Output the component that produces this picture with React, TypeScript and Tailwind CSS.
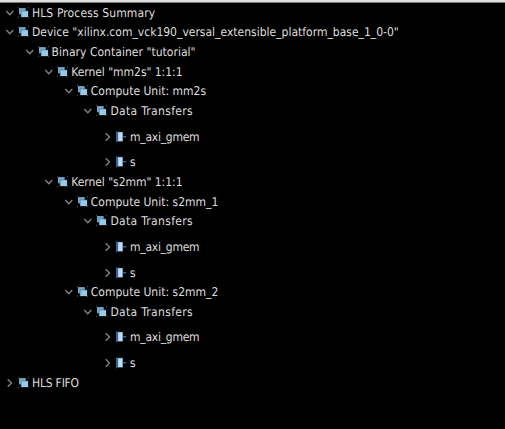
type Row = { label: string; depth: number; kind?: 'leaf' | 'closed'; spacing?: string };

const rows: Row[] = [
  { label: 'HLS Process Summary', depth: 0, spacing: 'tracking-[0.12px]' },
  { label: 'Device "xilinx.com_vck190_versal_extensible_platform_base_1_0-0"', depth: 0 },
  { label: 'Binary Container "tutorial"', depth: 1, spacing: 'tracking-[0.03px]' },
  { label: 'Kernel "mm2s" 1:1:1', depth: 2, spacing: 'tracking-[-0.04px]' },
  { label: 'Compute Unit: mm2s', depth: 3 },
  { label: 'Data Transfers', depth: 4, spacing: 'tracking-[0.32px]' },
  { label: 'm_axi_gmem', depth: 5, kind: 'leaf', spacing: 'tracking-[-0.25px]' },
  { label: 's', depth: 5, kind: 'leaf' },
  { label: 'Kernel "s2mm" 1:1:1', depth: 2, spacing: 'tracking-[-0.04px]' },
  { label: 'Compute Unit: s2mm_1', depth: 3 },
  { label: 'Data Transfers', depth: 4, spacing: 'tracking-[0.32px]' },
  { label: 'm_axi_gmem', depth: 5, kind: 'leaf', spacing: 'tracking-[-0.25px]' },
  { label: 's', depth: 5, kind: 'leaf' },
  { label: 'Compute Unit: s2mm_2', depth: 3 },
  { label: 'Data Transfers', depth: 4, spacing: 'tracking-[0.32px]' },
  { label: 'm_axi_gmem', depth: 5, kind: 'leaf', spacing: 'tracking-[-0.25px]' },
  { label: 's', depth: 5, kind: 'leaf' },
  { label: 'HLS FIFO', depth: 0, kind: 'closed', spacing: 'tracking-[-0.2px]' },
];

function Chevron({ open }: { open: boolean }) {
  return (
    <svg className="h-[10px] w-[10px] shrink-0" viewBox="0 0 10 10" fill="none" stroke="#858585" strokeWidth="1.3">
      <path d={open ? 'M1.3 3 L4.8 6.8 L8.3 3' : 'M2.7 1.2 L6.5 5 L2.7 8.8'} />
    </svg>
  );
}

function GroupIcon() {
  return (
    <svg className="ml-[3px] h-3 w-3 shrink-0" viewBox="0 0 12 12">
      <path d="M0 .3h1v1H0z M10 .3h1v1h-1z M0 9.8h1v1H0z M10 9.8h1v1h-1z" fill="#59636a" />
      <path d="M1 1.1h6.7v6.2H1z" fill="#73a9cb" />
      <path d="M2.8 3.7h7.4v6.6H2.8z" fill="#346887" />
      <path d="M3.4 4.2h6.6v5.8H3.4z" fill="#9cc8e2" />
    </svg>
  );
}

function PortIcon() {
  return (
    <svg className="ml-[3px] h-3 w-3 shrink-0 overflow-visible" viewBox="0 0 12 12">
      <path d="M0 .3h1.5v11H0z" fill="#2b649f" />
      <path d="M1.5 .9h5.4v9.6H1.5z" fill="#6b93bb" />
      <path d="M2.2 1.5h4.1v8.5H2.2z" fill="#c2daf2" />
      <path d="M6.9 5.2h3.5v1.2H6.9z" fill="#3c72aa" />
    </svg>
  );
}

export default function App() {
  return (
    <main className="h-[429px] w-[505px] overflow-hidden bg-black text-[#dedede]">
      <div className="h-[3px] border-b border-[#777777] bg-[#dcdfe0]" />
      <div role="tree">
        {rows.map((row, index) => (
          <div
            key={index}
            role="treeitem"
            className={`box-content flex h-[19.65px] items-center ${row.kind === 'leaf' ? 'pt-[6px]' : ''}`}
            style={{ paddingLeft: 5 + row.depth * 19.6 }}
          >
            <Chevron open={!row.kind} />
            {row.kind === 'leaf' ? <PortIcon /> : <GroupIcon />}
            <span className={`ml-[2px] whitespace-nowrap font-['DejaVu_Sans_Condensed','DejaVu_Sans',sans-serif] text-[12px] leading-[18px] [font-stretch:condensed] [text-rendering:geometricPrecision] ${row.spacing ?? ''}`}>
              {row.label}
            </span>
          </div>
        ))}
      </div>
    </main>
  );
}
